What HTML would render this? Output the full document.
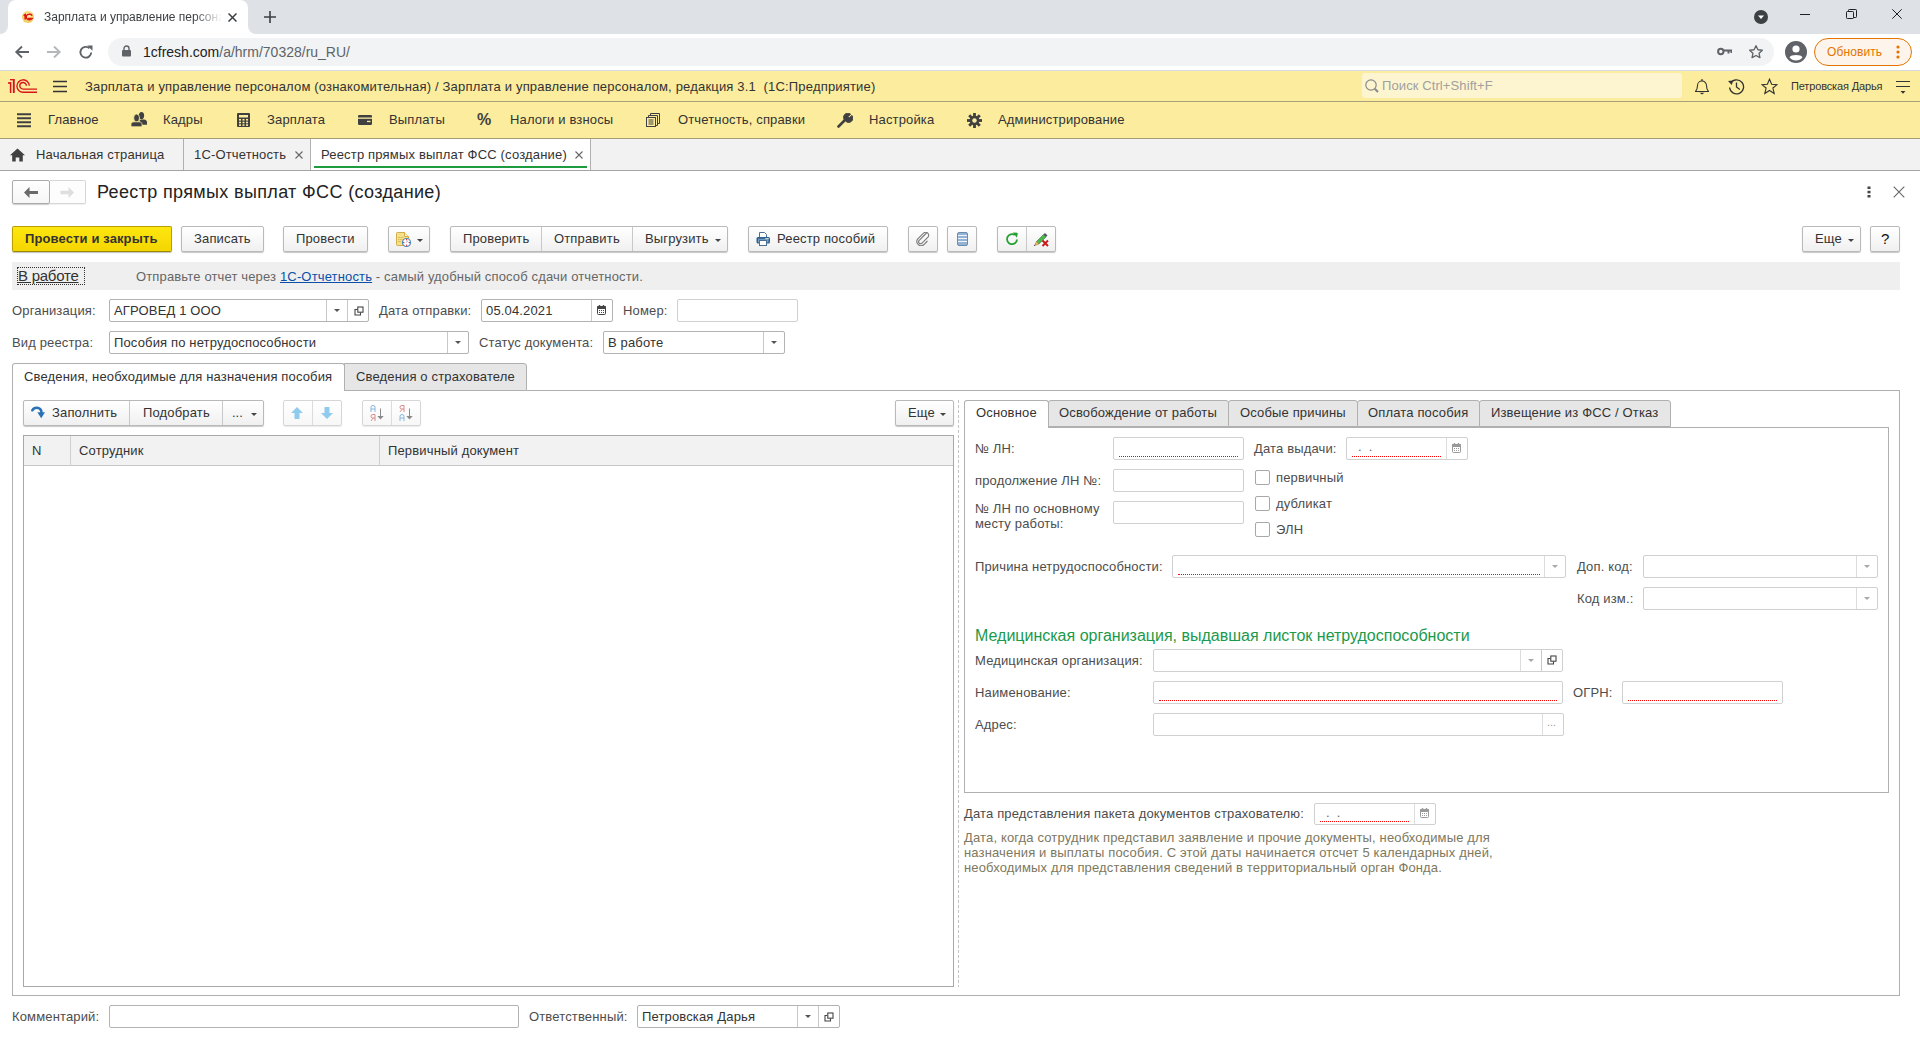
<!DOCTYPE html>
<html><head><meta charset="utf-8">
<style>
*{box-sizing:border-box;margin:0;padding:0}
html,body{width:1920px;height:1040px;overflow:hidden;background:#fff;font-family:"Liberation Sans",sans-serif;position:relative}
.a{position:absolute}
.t{position:absolute;white-space:nowrap;font-size:13px;color:#4d4d4d;line-height:15px}
.inp{position:absolute;border:1px solid #bdbdbd;border-radius:2px;background:#fff}
.btn{position:absolute;border:1px solid #b9b9b9;border-radius:2px;background:linear-gradient(#fff,#f0f0f0);box-shadow:0 1px 1px rgba(0,0,0,.22);font-size:13px;color:#333;white-space:nowrap;text-align:center;line-height:24px}
.dd{position:absolute;top:0;bottom:0;border-left:1px solid #d0d0d0;width:21px}
.dd::after{content:"";position:absolute;left:7px;top:9px;border-left:3px solid transparent;border-right:3px solid transparent;border-top:3px solid #555}
.dd.l::after{border-top-color:#a8a8a8}
.req{position:absolute;left:6px;right:18px;bottom:2px;border-bottom:1px dotted #f00}
</style></head><body>

<!-- ============ CHROME ============ -->
<div class="a" style="left:0;top:0;width:1920px;height:34px;background:#dee1e6"></div>
<div class="a" style="left:8px;top:0px;width:240px;height:34px;background:#fff;border-radius:8px 8px 0 0"></div>
<div class="a" style="left:0;top:26px;width:8px;height:8px;background:#fff"></div><div class="a" style="left:0;top:18px;width:8px;height:16px;background:#dee1e6;border-radius:0 0 8px 0"></div>
<div class="a" style="left:248px;top:26px;width:8px;height:8px;background:#fff"></div><div class="a" style="left:248px;top:18px;width:8px;height:16px;background:#dee1e6;border-radius:0 0 0 8px"></div>
<svg class="a" style="left:22px;top:11px" width="12" height="12" viewBox="0 0 12 12"><defs><radialGradient id="fg" cx="50%" cy="40%" r="60%"><stop offset="0" stop-color="#fff3b0"/><stop offset="1" stop-color="#f0c850"/></radialGradient></defs><circle cx="6" cy="6" r="6" fill="url(#fg)"/><path d="M1.6 4.6 L3.2 3.6 V8.6" stroke="#e01818" stroke-width="1.6" fill="none"/><path d="M10.2 4.6 A3.2 2.8 0 1 0 10 7.6 H6" stroke="#e01818" stroke-width="1.5" fill="none"/></svg>
<div class="a" style="left:44px;top:10px;width:178px;height:16px;overflow:hidden;font-size:12px;line-height:15px;color:#3c4043;white-space:nowrap;-webkit-mask-image:linear-gradient(90deg,#000 150px,transparent 178px)">Зарплата и управление персоналом (ознакомительная)</div>
<svg class="a" style="left:228px;top:13px" width="9" height="9" viewBox="0 0 9 9"><path d="M0.5 0.5 L8.5 8.5 M8.5 0.5 L0.5 8.5" stroke="#3c4043" stroke-width="1.5"/></svg>
<svg class="a" style="left:264px;top:11px" width="12" height="12" viewBox="0 0 12 12"><path d="M6 0 V12 M0 6 H12" stroke="#3c4043" stroke-width="1.6"/></svg>
<svg class="a" style="left:1754px;top:10px" width="14" height="14" viewBox="0 0 14 14"><circle cx="7" cy="7" r="7" fill="#3c4043"/><path d="M4 5.5 H10 L7 9 Z" fill="#fff"/></svg>
<div class="a" style="left:1800px;top:14px;width:10px;height:1px;background:#202124"></div>
<svg class="a" style="left:1846px;top:9px" width="11" height="11" viewBox="0 0 11 11"><rect x="0.5" y="2.5" width="7" height="7" rx="0.8" fill="none" stroke="#202124"/><path d="M2.5 2.5 V1.3 Q2.5 0.5 3.3 0.5 H9.7 Q10.5 0.5 10.5 1.3 V7.7 Q10.5 8.5 9.7 8.5 H7.5" fill="none" stroke="#202124"/></svg>
<svg class="a" style="left:1892px;top:9px" width="10" height="10" viewBox="0 0 10 10"><path d="M0.3 0.3 L9.7 9.7 M9.7 0.3 L0.3 9.7" stroke="#202124" stroke-width="1"/></svg>

<div class="a" style="left:0;top:34px;width:1920px;height:36px;background:#fff"></div>
<svg class="a" style="left:14px;top:44px" width="16" height="16" viewBox="0 0 16 16"><path d="M15 8 H2.5 M8 2.5 L2.3 8 L8 13.5" stroke="#5f6368" stroke-width="1.9" fill="none"/></svg>
<svg class="a" style="left:46px;top:44px" width="16" height="16" viewBox="0 0 16 16"><path d="M1 8 H13.5 M8 2.5 L13.7 8 L8 13.5" stroke="#b5b8bb" stroke-width="1.9" fill="none"/></svg>
<svg class="a" style="left:78px;top:44px" width="16" height="16" viewBox="0 0 16 16"><path d="M13.2 8.5 A5.4 5.4 0 1 1 11.5 4.3" stroke="#5f6368" stroke-width="1.9" fill="none"/><path d="M9.2 1.5 H14.5 V6.8 Z" fill="#5f6368"/></svg>
<div class="a" style="left:108px;top:38px;width:1666px;height:28px;background:#f1f3f4;border-radius:14px"></div>
<svg class="a" style="left:122px;top:45px" width="9" height="12" viewBox="0 0 9 12"><path d="M2 5 V3.5 A2.5 2.5 0 0 1 7 3.5 V5" stroke="#5f6368" stroke-width="1.4" fill="none"/><rect x="0" y="5" width="9" height="6.5" rx="1" fill="#5f6368"/></svg>
<div class="a" style="left:143px;top:44px;font-size:14px;line-height:16px;white-space:nowrap;color:#5f6368"><span style="color:#202124">1cfresh.com</span>/a/hrm/70328/ru_RU/</div>
<svg class="a" style="left:1717px;top:47px" width="15" height="9" viewBox="0 0 15 9"><circle cx="3.8" cy="4.5" r="2.7" stroke="#5f6368" stroke-width="2" fill="none"/><path d="M6.5 3.5 H14.5 V6 M11.5 3.5 V6.5" stroke="#5f6368" stroke-width="2" fill="none"/></svg>
<svg class="a" style="left:1748px;top:44px" width="16" height="16" viewBox="0 0 24 24"><path d="M12 2.5 L14.9 8.6 L21.5 9.4 L16.6 13.9 L17.9 20.5 L12 17.2 L6.1 20.5 L7.4 13.9 L2.5 9.4 L9.1 8.6 Z" stroke="#5f6368" stroke-width="2" fill="none" stroke-linejoin="round"/></svg>
<svg class="a" style="left:1785px;top:41px" width="22" height="22" viewBox="0 0 22 22"><circle cx="11" cy="11" r="11" fill="#5f6368"/><circle cx="11" cy="8" r="3.6" fill="#fff"/><path d="M4.5 16.3 C6 13.3 16 13.3 17.5 16.3 C16 18.5 13.5 19.6 11 19.6 C8.5 19.6 6 18.5 4.5 16.3 Z" fill="#fff"/></svg>
<div class="a" style="left:1814px;top:38px;width:98px;height:28px;border:1px solid #e37400;border-radius:14px;background:#fdf4eb"></div>
<div class="a" style="left:1827px;top:44px;font-size:12px;line-height:16px;color:#e37400;white-space:nowrap;letter-spacing:.1px">Обновить</div>
<svg class="a" style="left:1896px;top:45px" width="4" height="14" viewBox="0 0 4 14"><circle cx="2" cy="2" r="1.6" fill="#e37400"/><circle cx="2" cy="7" r="1.6" fill="#e37400"/><circle cx="2" cy="12" r="1.6" fill="#e37400"/></svg>

<!-- ============ 1C HEADER ============ -->
<div class="a" style="left:0;top:70px;width:1920px;height:68px;background:#fbec9e"></div>
<div class="a" style="left:0;top:70px;width:1920px;height:1px;background:#d7d9e1"></div>
<div class="a" style="left:0;top:101px;width:1920px;height:1px;background:#a8a07a"></div>
<div class="a" style="left:0;top:138px;width:1920px;height:1px;background:#a49c74"></div>
<svg class="a" style="left:0;top:70px" width="80" height="31" viewBox="0 70 80 31">
<g stroke="#d8141b" fill="none">
<path d="M8 83 H11" stroke-width="1.6"/>
<path d="M10.6 82.2 V93" stroke-width="1.5"/>
<path d="M10 79.7 H14.5" stroke-width="1.3"/>
<path d="M13.8 79.2 V93" stroke-width="1.9"/>
<path d="M29.3 85.8 A6.2 6.2 0 1 0 23.1 92.2 H37" stroke-width="1.35"/>
<path d="M26.4 85.8 A3.3 3.3 0 1 0 23.1 89.1 H37" stroke-width="1.35"/>
</g>
<g stroke="#333" stroke-width="1.5"><path d="M53 81.5 H67 M53 86.5 H67 M53 91.5 H67"/></g>
</svg>
<div class="t" style="left:85px;top:79px;color:#333;letter-spacing:.18px">Зарплата и управление персоналом (ознакомительная) / Зарплата и управление персоналом, редакция 3.1&nbsp; (1С:Предприятие)</div>
<div class="a" style="left:1362px;top:73px;width:320px;height:25px;background:#fdf5cf;border-radius:3px"></div>
<svg class="a" style="left:1364px;top:78px" width="16" height="16" viewBox="0 0 16 16"><circle cx="7" cy="7" r="5.2" stroke="#888" stroke-width="1.2" fill="none"/><path d="M10.8 10.8 L14 14" stroke="#888" stroke-width="2"/></svg>
<div class="t" style="left:1382px;top:78px;color:#a0a0a0;letter-spacing:.1px">Поиск Ctrl+Shift+F</div>
<svg class="a" style="left:1694px;top:78px" width="16" height="17" viewBox="0 0 16 17"><path d="M1.5 13.5 C3 12 3.5 10.5 3.5 7.5 A4.5 4.5 0 0 1 12.5 7.5 C12.5 10.5 13 12 14.5 13.5 Z" stroke="#333" stroke-width="1.1" fill="none" stroke-linejoin="round"/><path d="M8 1 V3" stroke="#333" stroke-width="1.2"/><path d="M5.5 14.8 H10.5 L8 16.6 Z" fill="#333"/></svg>
<svg class="a" style="left:1727px;top:78px" width="18" height="17" viewBox="0 0 18 17"><path d="M3.6 5.2 A7 7 0 1 1 2.6 9.5" stroke="#333" stroke-width="1.3" fill="none"/><path d="M1 3 L4.8 7 L6 2.5 Z" fill="#333"/><path d="M9.5 4.5 V9 L12.8 11.5" stroke="#333" stroke-width="1.3" fill="none"/></svg>
<svg class="a" style="left:1761px;top:78px" width="17" height="17" viewBox="0 0 24 24"><path d="M12 1.8 L15 8.9 L22.6 9.4 L16.8 14.2 L18.6 21.8 L12 17.7 L5.4 21.8 L7.2 14.2 L1.4 9.4 L9 8.9 Z" stroke="#333" stroke-width="1.6" fill="none" stroke-linejoin="miter"/></svg>
<div class="t" style="left:1791px;top:79px;font-size:11px;color:#333;letter-spacing:-.15px">Петровская Дарья</div>
<svg class="a" style="left:1896px;top:80px" width="15" height="15" viewBox="0 0 15 15"><path d="M0 1.5 H14 M0 6.5 H14" stroke="#333" stroke-width="1"/><path d="M4.5 11 H9.5 L7 13.8 Z" fill="#333"/></svg>

<!-- sections -->
<svg class="a" style="left:17px;top:113px" width="15" height="16" viewBox="0 0 15 16"><path d="M0 1.3 H14 M0 5.3 H14 M0 9.3 H14 M0 13.3 H14" stroke="#404040" stroke-width="2"/></svg>
<div class="t" style="left:48px;top:112px;color:#333;letter-spacing:.15px">Главное</div>
<svg class="a" style="left:131px;top:112px" width="17" height="15" viewBox="0 0 17 15"><ellipse cx="10.5" cy="3.6" rx="2.6" ry="3.6" fill="#404040"/><path d="M8.5 8.3 C9.5 7.6 11.5 7.6 13 7.6 C15 7.8 16 8.8 16 10.5 V12.8 H9.5 Z" fill="#404040"/><ellipse cx="5.6" cy="6" rx="2.9" ry="3.9" fill="#404040" stroke="#fbec9e" stroke-width="0.8"/><path d="M0 12.5 C0 10.8 1 10 3 9.8 H8.2 C10.2 10 11 10.8 11 12.5 V14.8 H0 Z" fill="#404040" stroke="#fbec9e" stroke-width="0.8"/></svg>
<div class="t" style="left:163px;top:112px;color:#333;letter-spacing:.15px">Кадры</div>
<svg class="a" style="left:237px;top:113px" width="13" height="14" viewBox="0 0 13 14"><rect x="0" y="0" width="13" height="14" rx="1" fill="#404040"/><rect x="2" y="2" width="9" height="2.5" fill="#fbec9e"/><g fill="#fbec9e"><rect x="2" y="6" width="2" height="1.6"/><rect x="5.5" y="6" width="2" height="1.6"/><rect x="9" y="6" width="2" height="1.6"/><rect x="2" y="8.7" width="2" height="1.6"/><rect x="5.5" y="8.7" width="2" height="1.6"/><rect x="9" y="8.7" width="2" height="1.6"/><rect x="2" y="11.3" width="2" height="1.6"/><rect x="5.5" y="11.3" width="2" height="1.6"/><rect x="9" y="11.3" width="2" height="1.6"/></g></svg>
<div class="t" style="left:267px;top:112px;color:#333;letter-spacing:.15px">Зарплата</div>
<svg class="a" style="left:358px;top:115px" width="14" height="10" viewBox="0 0 14 10"><rect x="0" y="0" width="14" height="10" rx="1.2" fill="#404040"/><rect x="0" y="2.5" width="14" height="1.3" fill="#fbec9e"/><rect x="9" y="5.8" width="3.5" height="1.3" fill="#fbec9e"/></svg>
<div class="t" style="left:389px;top:112px;color:#333;letter-spacing:.15px">Выплаты</div>
<div class="a" style="left:477px;top:111px;font-size:16px;font-weight:bold;color:#404040;line-height:18px">%</div>
<div class="t" style="left:510px;top:112px;color:#333;letter-spacing:.15px">Налоги и взносы</div>
<svg class="a" style="left:646px;top:113px" width="14" height="14" viewBox="0 0 14 14"><g fill="none" stroke="#404040" stroke-width="1"><path d="M4.5 2.5 V0.5 H13.5 V10.5 H11.5"/><path d="M2.5 4.5 V2.5 H11.5 V12.5 H9.5"/><rect x="0.5" y="4.5" width="9" height="9"/><path d="M2.5 7 H7.5 M2.5 9 H7.5 M2.5 11 H7.5"/></g></svg>
<div class="t" style="left:678px;top:112px;color:#333;letter-spacing:.15px">Отчетность, справки</div>
<svg class="a" style="left:837px;top:113px" width="16" height="15" viewBox="0 0 16 15"><path d="M1.5 13.5 L8 7" stroke="#404040" stroke-width="2.6" stroke-linecap="round"/><path d="M8 7.5 A4.2 4.2 0 0 1 13.6 1.2 L11 3.8 L12.2 5 L14.8 2.4 A4.2 4.2 0 0 1 8.5 8 Z" fill="#404040" stroke="#404040" stroke-width="1"/></svg>
<div class="t" style="left:869px;top:112px;color:#333;letter-spacing:.15px">Настройка</div>
<svg class="a" style="left:967px;top:113px" width="15" height="15" viewBox="0 0 16 16"><g fill="#404040"><circle cx="8" cy="8" r="5.2"/><rect x="6.5" y="0" width="3" height="16"/><rect x="0" y="6.5" width="16" height="3"/><rect x="6.5" y="0" width="3" height="16" transform="rotate(45 8 8)"/><rect x="6.5" y="0" width="3" height="16" transform="rotate(-45 8 8)"/></g><circle cx="8" cy="8" r="2.4" fill="#fbec9e"/></svg>
<div class="t" style="left:998px;top:112px;color:#333;letter-spacing:.15px">Администрирование</div>

<!-- ============ OPEN TABS BAR ============ -->
<div class="a" style="left:0;top:139px;width:1920px;height:31px;background:#f2f2f2"></div>
<div class="a" style="left:311px;top:139px;width:279px;height:31px;background:#fff"></div>
<div class="a" style="left:0;top:170px;width:1920px;height:1px;background:#a3a3a3"></div>
<div class="a" style="left:183px;top:139px;width:1px;height:31px;background:#b0b0b0"></div>
<div class="a" style="left:310px;top:139px;width:1px;height:31px;background:#b0b0b0"></div>
<div class="a" style="left:590px;top:139px;width:1px;height:31px;background:#b0b0b0"></div>
<svg class="a" style="left:10px;top:148px" width="15" height="14" viewBox="0 0 15 14"><path d="M7.5 0.5 L15 7.2 H12.8 V13.5 H9.3 V9.5 H5.7 V13.5 H2.2 V7.2 H0 Z" fill="#404040"/></svg>
<div class="t" style="left:36px;top:147px;color:#333;letter-spacing:.15px">Начальная страница</div>
<div class="t" style="left:194px;top:147px;color:#333;letter-spacing:.15px">1С-Отчетность</div>
<svg class="a" style="left:295px;top:151px" width="8" height="8" viewBox="0 0 8 8"><path d="M0.5 0.5 L7.5 7.5 M7.5 0.5 L0.5 7.5" stroke="#666" stroke-width="1.1"/></svg>
<div class="t" style="left:321px;top:147px;color:#333;letter-spacing:.18px">Реестр прямых выплат ФСС (создание)</div>
<svg class="a" style="left:575px;top:151px" width="8" height="8" viewBox="0 0 8 8"><path d="M0.5 0.5 L7.5 7.5 M7.5 0.5 L0.5 7.5" stroke="#666" stroke-width="1.1"/></svg>
<div class="a" style="left:314px;top:166px;width:273px;height:2px;background:#1e9b3e"></div>

<!-- ============ FORM HEADER ============ -->
<div class="btn" style="left:12px;top:180px;width:38px;height:24px;border-color:#ababab;border-radius:2px;background:linear-gradient(#fff,#f6f6f6);box-shadow:0 1px 1px rgba(0,0,0,.2)"></div>
<div class="btn" style="left:50px;top:180px;width:36px;height:24px;border-color:#d6d6d6;border-left:none;box-shadow:0 1px 1px rgba(0,0,0,.06);border-radius:0 2px 2px 0;background:#fdfdfd"></div>
<svg class="a" style="left:24px;top:187px" width="14" height="11" viewBox="0 0 14 11"><path d="M0 5.5 L5.5 0 V4 H14 V7 H5.5 V11 Z" fill="#6a6a6a"/></svg>
<svg class="a" style="left:60px;top:187px" width="14" height="11" viewBox="0 0 14 11"><path d="M14 5.5 L8.5 0 V3.8 H0.5 V7.2 H8.5 V11 Z" fill="#dedede"/></svg>
<div class="t" style="left:97px;top:182px;font-size:18px;line-height:21px;color:#222;letter-spacing:.35px">Реестр прямых выплат ФСС (создание)</div>
<svg class="a" style="left:1867px;top:186px" width="4" height="12" viewBox="0 0 4 12"><rect x="0.5" y="0.5" width="3" height="2.5" fill="#444"/><rect x="0.5" y="4.8" width="3" height="2.5" fill="#444"/><rect x="0.5" y="9" width="3" height="2.5" fill="#444"/></svg>
<svg class="a" style="left:1893px;top:186px" width="12" height="12" viewBox="0 0 12 12"><path d="M0.7 0.7 L11.3 11.3 M11.3 0.7 L0.7 11.3" stroke="#666" stroke-width="1.1"/></svg>

<!-- command bar -->
<div class="a" style="left:12px;top:226px;width:160px;height:26px;border:1px solid #b9a000;border-bottom-color:#9c8800;border-radius:2px;background:linear-gradient(#ffe60f,#f4d600);box-shadow:0 1px 1px rgba(0,0,0,.25)"></div>
<div class="t" style="left:25px;top:231px;font-weight:bold;color:#333;letter-spacing:.12px">Провести и закрыть</div>
<div class="btn" style="left:181px;top:226px;width:83px;height:26px"></div>
<div class="t" style="left:194px;top:231px;color:#333;letter-spacing:.15px">Записать</div>
<div class="btn" style="left:283px;top:226px;width:85px;height:26px"></div>
<div class="t" style="left:296px;top:231px;color:#333;letter-spacing:.15px">Провести</div>
<div class="btn" style="left:388px;top:226px;width:42px;height:26px"></div>
<svg class="a" style="left:395px;top:231px" width="17" height="17" viewBox="0 0 17 17"><path d="M1.5 2.5 Q1.5 1.5 2.5 1.5 H9.5 L13.5 5.5 V13.5 Q13.5 14.5 12.5 14.5 H2.5 Q1.5 14.5 1.5 13.5 Z" fill="#f3df8c" stroke="#d2ad48" stroke-width="1"/><path d="M9.5 1.5 V5.5 H13.5" fill="#fff4c8" stroke="#d2ad48" stroke-width="1"/><g fill="#dcbc5c"><rect x="3" y="6" width="2" height="1"/><rect x="5.5" y="6" width="3" height="1"/><rect x="3" y="8" width="1" height="1"/><rect x="4.5" y="8" width="3" height="1"/><rect x="3" y="10" width="3" height="1"/></g><circle cx="11.5" cy="11.5" r="4" fill="#fff" stroke="#4d84bc" stroke-width="1.2"/><g fill="#e01010"><rect x="11" y="8.2" width="1.1" height="1.1"/><rect x="11" y="13.7" width="1.1" height="1.1"/><rect x="8.2" y="11" width="1.1" height="1.1"/><rect x="13.7" y="11" width="1.1" height="1.1"/></g><path d="M11.5 11.5 L12.9 9.6" stroke="#7aa4d8" stroke-width="0.9"/></svg>
<div class="a" style="left:417px;top:239px;border-left:3px solid transparent;border-right:3px solid transparent;border-top:3px solid #444"></div>
<div class="btn" style="left:450px;top:226px;width:278px;height:26px"></div>
<div class="a" style="left:541px;top:227px;width:1px;height:24px;background:#c8c8c8"></div>
<div class="a" style="left:632px;top:227px;width:1px;height:24px;background:#c8c8c8"></div>
<div class="t" style="left:463px;top:231px;color:#333;letter-spacing:.15px">Проверить</div>
<div class="t" style="left:554px;top:231px;color:#333;letter-spacing:.15px">Отправить</div>
<div class="t" style="left:645px;top:231px;color:#333;letter-spacing:.15px">Выгрузить</div>
<div class="a" style="left:715px;top:239px;border-left:3px solid transparent;border-right:3px solid transparent;border-top:3px solid #444"></div>
<div class="btn" style="left:748px;top:226px;width:140px;height:26px"></div>
<svg class="a" style="left:756px;top:232px" width="15" height="14" viewBox="0 0 15 14"><path d="M3.5 5 V0.5 H8.5 L10.5 2.5 V5" fill="#fff" stroke="#4d6f90" stroke-width="1"/><rect x="0.5" y="5" width="13.5" height="6.5" rx="1.5" fill="#2f6090"/><rect x="2" y="6.5" width="10.5" height="4" fill="#7fa2c4"/><rect x="2" y="6.2" width="10.5" height="1" fill="#3a6896"/><rect x="9.5" y="6" width="1.2" height="1.2" fill="#fff"/><rect x="11.3" y="6" width="1.2" height="1.2" fill="#fff"/><rect x="3.5" y="8.5" width="7" height="5" fill="#fff" stroke="#4d6f90" stroke-width="1"/></svg>
<div class="t" style="left:777px;top:231px;color:#333;letter-spacing:.15px">Реестр пособий</div>
<div class="btn" style="left:908px;top:226px;width:30px;height:26px"></div>
<svg class="a" style="left:916px;top:232px" width="14" height="14" viewBox="0 0 14 14"><path d="M11 0.5 L3 8.5 A2 2 0 0 0 5.8 11.3 L12 5.1 A3 3 0 0 0 7.8 0.9 L1.8 6.9 A4.2 4.2 0 0 0 7.7 12.8 L11.5 9" stroke="#7a7a7a" stroke-width="1.1" fill="none"/></svg>
<div class="btn" style="left:947px;top:226px;width:30px;height:26px"></div>
<svg class="a" style="left:957px;top:232px" width="11" height="14" viewBox="0 0 11 14"><rect x="0.5" y="0.5" width="10" height="13" rx="1.5" fill="#93b4d4" stroke="#6a8cae"/><path d="M1 3.5 H10 M1 6.5 H10 M1 9.5 H10" stroke="#eef4fa" stroke-width="1.1"/></svg>
<div class="btn" style="left:997px;top:226px;width:59px;height:26px"></div>
<div class="a" style="left:1026px;top:227px;width:1px;height:24px;background:#c8c8c8"></div>
<svg class="a" style="left:1005px;top:232px" width="14" height="14" viewBox="0 0 14 14"><path d="M12 7.5 A5 5 0 1 1 9.8 3" stroke="#22a030" stroke-width="1.8" fill="none"/><path d="M7.8 0.5 L12.8 0.8 L12 5.8 Z" fill="#22a030"/></svg>
<svg class="a" style="left:1033px;top:232px" width="17" height="16" viewBox="0 0 17 16"><path d="M3.5 9.5 L10.5 2.5 L13 5 L6 12 Z" fill="#4cb84c" stroke="#3a7a3a" stroke-width="0.6"/><path d="M10.5 2.5 L12 1 L14.5 3.5 L13 5 Z" fill="#4a5868"/><path d="M3.5 9.5 L6 12 L1.2 13.8 Z" fill="#f2c060" stroke="#8a6a3a" stroke-width="0.5"/><path d="M1.2 13.8 L2.2 12.9" stroke="#444" stroke-width="0.8"/><path d="M9.5 8.5 L15 14 M15 8.5 L9.5 14" stroke="#c81818" stroke-width="1.9"/></svg>
<div class="btn" style="left:1802px;top:226px;width:59px;height:26px"></div>
<div class="t" style="left:1815px;top:231px;color:#333;letter-spacing:.15px">Еще</div>
<div class="a" style="left:1848px;top:239px;border-left:3px solid transparent;border-right:3px solid transparent;border-top:3px solid #444"></div>
<div class="btn" style="left:1870px;top:226px;width:30px;height:26px"></div>
<div class="t" style="left:1881px;top:230px;color:#111;font-size:15px;line-height:17px">?</div>

<!-- info bar -->
<div class="a" style="left:12px;top:262px;width:1888px;height:28px;background:#efefef"></div>
<div class="a" style="left:17px;top:267px;width:68px;height:18px;border:1px dotted #333"></div>
<div class="t" style="left:18px;top:268px;font-size:15px;color:#333;text-decoration:underline;letter-spacing:-.25px">В работе</div>
<div class="t" style="left:136px;top:269px;color:#666;letter-spacing:.15px">Отправьте отчет через <span style="color:#0b4fa8;text-decoration:underline">1С-Отчетность</span> - самый удобный способ сдачи отчетности.</div>

<!-- rows -->
<div class="t" style="left:12px;top:303px;letter-spacing:.15px">Организация:</div>
<div class="inp" style="left:109px;top:299px;width:260px;height:23px;border-color:#b3b3b3"><div class="dd" style="left:216px;border-color:#c8c8c8"></div><div class="a" style="left:237px;top:0;bottom:0;width:1px;background:#c8c8c8"></div></div>
<div class="t" style="left:114px;top:303px;color:#333;letter-spacing:.15px">АГРОВЕД 1 ООО</div>
<svg class="a" style="left:354px;top:306px" width="10" height="10" viewBox="0 0 10 10"><path d="M3.5 3.5 H1 V9 H6.5 V6.5" fill="none" stroke="#444" stroke-width="1.1"/><rect x="3.8" y="1" width="5.2" height="5.2" fill="none" stroke="#444" stroke-width="1.1"/></svg>
<div class="t" style="left:379px;top:303px;letter-spacing:.15px">Дата отправки:</div>
<div class="inp" style="left:481px;top:299px;width:132px;height:23px;border-color:#b3b3b3"><div class="a" style="left:109px;top:0;bottom:0;width:1px;background:#c8c8c8"></div></div>
<div class="t" style="left:486px;top:303px;color:#333;letter-spacing:.15px">05.04.2021</div>
<svg class="a" style="left:597px;top:305px" width="9" height="10" viewBox="0 0 9 10"><rect x="0.5" y="1.5" width="8" height="8" rx="1" fill="#fff" stroke="#444"/><rect x="0" y="1" width="9" height="3" rx="0.8" fill="#444"/><rect x="1.8" y="0" width="1.4" height="2" fill="#444"/><rect x="5.8" y="0" width="1.4" height="2" fill="#444"/><g fill="#444"><rect x="2" y="5" width="1" height="1"/><rect x="4" y="5" width="1" height="1"/><rect x="6" y="5" width="1" height="1"/><rect x="2" y="7" width="1" height="1"/><rect x="4" y="7" width="1" height="1"/><rect x="6" y="7" width="1" height="1"/></g></svg>
<div class="t" style="left:623px;top:303px;letter-spacing:.15px">Номер:</div>
<div class="inp" style="left:677px;top:299px;width:121px;height:23px;border-color:#d0d0d0"></div>

<div class="t" style="left:12px;top:335px;letter-spacing:.15px">Вид реестра:</div>
<div class="inp" style="left:109px;top:331px;width:360px;height:23px;border-color:#b3b3b3"><div class="dd" style="left:337px;border-color:#c8c8c8"></div></div>
<div class="t" style="left:114px;top:335px;color:#333;letter-spacing:.15px">Пособия по нетрудоспособности</div>
<div class="t" style="left:479px;top:335px;letter-spacing:.15px">Статус документа:</div>
<div class="inp" style="left:603px;top:331px;width:182px;height:23px;border-color:#b3b3b3"><div class="dd" style="left:159px;border-color:#c8c8c8"></div></div>
<div class="t" style="left:608px;top:335px;color:#333;letter-spacing:.15px">В работе</div>

<!-- main tabs -->
<div class="a" style="left:12px;top:390px;width:1888px;height:606px;border:1px solid #b0b0b0;border-top:none"></div>
<div class="a" style="left:527px;top:390px;width:1373px;height:1px;background:#b0b0b0"></div>
<div class="a" style="left:12px;top:363px;width:333px;height:28px;border:1px solid #b0b0b0;border-bottom:none;border-radius:3px 3px 0 0;background:#fff"></div>
<div class="a" style="left:344px;top:363px;width:183px;height:28px;border:1px solid #b0b0b0;border-radius:0 3px 0 0;background:#e6e6e6"></div>
<div class="t" style="left:24px;top:369px;letter-spacing:.15px;color:#333">Сведения, необходимые для назначения пособия</div>
<div class="t" style="left:356px;top:369px;letter-spacing:.15px;color:#333">Сведения о страхователе</div>

<!-- left panel -->
<div class="btn" style="left:23px;top:400px;width:241px;height:26px"></div>
<div class="a" style="left:129px;top:401px;width:1px;height:24px;background:#c8c8c8"></div>
<div class="a" style="left:222px;top:401px;width:1px;height:24px;background:#c8c8c8"></div>
<svg class="a" style="left:31px;top:406px" width="15" height="13" viewBox="0 0 15 13"><path d="M1.3 4.3 C3 1.2 8.3 0.6 10.3 4.8 V6.5" stroke="#2a72b5" stroke-width="2.5" fill="none" stroke-linecap="round"/><path d="M6.3 6.2 H14 L10.2 12.3 Z" fill="#2a72b5"/></svg>
<div class="t" style="left:52px;top:405px;color:#333;letter-spacing:.15px">Заполнить</div>
<div class="t" style="left:143px;top:405px;color:#333;letter-spacing:.15px">Подобрать</div>
<div class="t" style="left:232px;top:405px;color:#333">...</div>
<div class="a" style="left:251px;top:413px;border-left:3px solid transparent;border-right:3px solid transparent;border-top:3px solid #444"></div>
<div class="btn" style="left:283px;top:400px;width:59px;height:26px;border-color:#d6d6d6;background:linear-gradient(#fff,#f7f7f7);box-shadow:0 1px 1px rgba(0,0,0,.08)"></div>
<div class="a" style="left:312px;top:401px;width:1px;height:24px;background:#dcdcdc"></div>
<svg class="a" style="left:291px;top:407px" width="12" height="12" viewBox="0 0 12 12"><path d="M6 0 L12 6 H8.5 V12 H3.5 V6 H0 Z" fill="#8fcbef"/></svg>
<svg class="a" style="left:321px;top:407px" width="12" height="12" viewBox="0 0 12 12"><path d="M6 12 L12 6 H8.5 V0 H3.5 V6 H0 Z" fill="#8fcbef"/></svg>
<div class="btn" style="left:362px;top:400px;width:59px;height:26px;border-color:#d6d6d6;background:linear-gradient(#fff,#f7f7f7);box-shadow:0 1px 1px rgba(0,0,0,.08)"></div>
<div class="a" style="left:391px;top:401px;width:1px;height:24px;background:#dcdcdc"></div>
<svg class="a" style="left:370px;top:405px" width="16" height="17" viewBox="0 0 16 17"><g transform="translate(0.5 0)"><path d="M0.5 7 V2.3 Q0.5 0.5 2.5 0.5 Q4.5 0.5 4.5 2.3 V7 M0.5 4 H4.5" stroke="#86b6de" stroke-width="1" fill="none"/></g><g transform="translate(0.5 9)"><path d="M4.5 7 V0.5 H2.3 Q0.5 0.5 0.5 2.3 Q0.5 4 2.3 4 H4.5 M2.6 4.2 L0.6 6.8" stroke="#d98888" stroke-width="1" fill="none"/></g><g transform="translate(0 2)"><path d="M10.5 1.5 V10" stroke="#8a8a8a" stroke-width="1"/><path d="M7.3 9 H13.7 L10.5 12.5 Z" fill="#8a8a8a"/></g></svg>
<svg class="a" style="left:399px;top:405px" width="16" height="17" viewBox="0 0 16 17"><g transform="translate(0.5 0)"><path d="M4.5 7 V0.5 H2.3 Q0.5 0.5 0.5 2.3 Q0.5 4 2.3 4 H4.5 M2.6 4.2 L0.6 6.8" stroke="#d98888" stroke-width="1" fill="none"/></g><g transform="translate(0.5 9)"><path d="M0.5 7 V2.3 Q0.5 0.5 2.5 0.5 Q4.5 0.5 4.5 2.3 V7 M0.5 4 H4.5" stroke="#86b6de" stroke-width="1" fill="none"/></g><g transform="translate(0 2)"><path d="M10.5 1.5 V10" stroke="#8a8a8a" stroke-width="1"/><path d="M7.3 9 H13.7 L10.5 12.5 Z" fill="#8a8a8a"/></g></svg>
<div class="btn" style="left:895px;top:400px;width:59px;height:26px"></div>
<div class="t" style="left:908px;top:405px;color:#333;letter-spacing:.15px">Еще</div>
<div class="a" style="left:940px;top:413px;border-left:3px solid transparent;border-right:3px solid transparent;border-top:3px solid #444"></div>

<div class="a" style="left:23px;top:435px;width:931px;height:552px;border:1px solid #a8a8a8"></div>
<div class="a" style="left:24px;top:436px;width:929px;height:30px;background:#f2f2f2;border-bottom:1px solid #c6c6c6"></div>
<div class="a" style="left:70px;top:436px;width:1px;height:30px;background:#cfcfcf"></div>
<div class="a" style="left:379px;top:436px;width:1px;height:30px;background:#cfcfcf"></div>
<div class="t" style="left:32px;top:443px;color:#333">N</div>
<div class="t" style="left:79px;top:443px;color:#333;letter-spacing:.15px">Сотрудник</div>
<div class="t" style="left:388px;top:443px;color:#333;letter-spacing:.15px">Первичный документ</div>
<div class="a" style="left:958px;top:400px;width:1px;height:587px;background:repeating-linear-gradient(#c4c4c4 0 3px,transparent 3px 5px)"></div>

<!-- right panel tabs -->
<div class="a" style="left:964px;top:427px;width:925px;height:366px;border:1px solid #b0b0b0"></div>
<div class="a" style="left:964px;top:400px;width:85px;height:28px;border:1px solid #b0b0b0;border-bottom:none;border-radius:3px 3px 0 0;background:#fff"></div>
<div class="a" style="left:1048px;top:400px;width:181px;height:27px;border:1px solid #b0b0b0;border-radius:3px 3px 0 0;background:#e6e6e6"></div>
<div class="a" style="left:1228px;top:400px;width:130px;height:27px;border:1px solid #b0b0b0;border-radius:3px 3px 0 0;background:#e6e6e6"></div>
<div class="a" style="left:1357px;top:400px;width:123px;height:27px;border:1px solid #b0b0b0;border-radius:3px 3px 0 0;background:#e6e6e6"></div>
<div class="a" style="left:1479px;top:400px;width:192px;height:27px;border:1px solid #b0b0b0;border-radius:3px 3px 0 0;background:#e6e6e6"></div>
<div class="t" style="left:976px;top:405px;color:#333;letter-spacing:.15px">Основное</div>
<div class="t" style="left:1059px;top:405px;color:#333;letter-spacing:.15px">Освобождение от работы</div>
<div class="t" style="left:1240px;top:405px;color:#333;letter-spacing:.15px">Особые причины</div>
<div class="t" style="left:1368px;top:405px;color:#333;letter-spacing:.15px">Оплата пособия</div>
<div class="t" style="left:1491px;top:405px;color:#333;letter-spacing:.15px">Извещение из ФСС / Отказ</div>

<div class="t" style="left:975px;top:441px;letter-spacing:.15px">№ ЛН:</div>
<div class="inp" style="left:1113px;top:437px;width:131px;height:23px;border-color:#d0d0d0"><div class="req" style="left:5px;right:5px"></div></div>
<div class="t" style="left:1254px;top:441px;letter-spacing:.15px">Дата выдачи:</div>
<div class="inp" style="left:1346px;top:437px;width:122px;height:23px;border-color:#d0d0d0"><div class="a" style="left:99px;top:0;bottom:0;width:1px;background:#dcdcdc"></div><div class="req" style="left:5px;right:26px"></div></div>
<div class="t" style="left:1358px;top:439px;color:#666">.&nbsp;&nbsp;.</div>
<svg class="a" style="left:1452px;top:443px" width="9" height="10" viewBox="0 0 9 10"><rect x="0.5" y="1.5" width="8" height="8" rx="1" fill="#fff" stroke="#999"/><rect x="0" y="1" width="9" height="3" rx="0.8" fill="#999"/><rect x="1.8" y="0" width="1.4" height="2" fill="#999"/><rect x="5.8" y="0" width="1.4" height="2" fill="#999"/><g fill="#999"><rect x="2" y="5" width="1" height="1"/><rect x="4" y="5" width="1" height="1"/><rect x="6" y="5" width="1" height="1"/><rect x="2" y="7" width="1" height="1"/><rect x="4" y="7" width="1" height="1"/><rect x="6" y="7" width="1" height="1"/></g></svg>
<div class="t" style="left:975px;top:473px;letter-spacing:.15px">продолжение ЛН №:</div>
<div class="inp" style="left:1113px;top:469px;width:131px;height:23px;border-color:#d0d0d0"></div>
<div class="t" style="left:975px;top:501px;letter-spacing:.15px;line-height:15px">№ ЛН по основному<br>месту работы:</div>
<div class="inp" style="left:1113px;top:501px;width:131px;height:23px;border-color:#d0d0d0"></div>
<div class="a" style="left:1255px;top:470px;width:15px;height:15px;border:1px solid #a8a8a8;border-radius:2px;background:#fff"></div>
<div class="t" style="left:1276px;top:470px;letter-spacing:.15px">первичный</div>
<div class="a" style="left:1255px;top:496px;width:15px;height:15px;border:1px solid #a8a8a8;border-radius:2px;background:#fff"></div>
<div class="t" style="left:1276px;top:496px;letter-spacing:.15px">дубликат</div>
<div class="a" style="left:1255px;top:522px;width:15px;height:15px;border:1px solid #a8a8a8;border-radius:2px;background:#fff"></div>
<div class="t" style="left:1276px;top:522px;letter-spacing:.15px">ЭЛН</div>

<div class="t" style="left:975px;top:559px;letter-spacing:.15px">Причина нетрудоспособности:</div>
<div class="inp" style="left:1172px;top:555px;width:394px;height:23px;border-color:#d0d0d0"><div class="req" style="left:5px;right:25px"></div><div class="dd l" style="left:371px;border-color:#dcdcdc"></div></div>
<div class="t" style="left:1577px;top:559px;letter-spacing:.15px">Доп. код:</div>
<div class="inp" style="left:1643px;top:555px;width:235px;height:23px;border-color:#d0d0d0"><div class="dd l" style="left:212px;border-color:#dcdcdc"></div></div>
<div class="t" style="left:1577px;top:591px;letter-spacing:.15px">Код изм.:</div>
<div class="inp" style="left:1643px;top:587px;width:235px;height:23px;border-color:#d0d0d0"><div class="dd l" style="left:212px;border-color:#dcdcdc"></div></div>

<div class="t" style="left:975px;top:627px;font-size:16px;line-height:18px;color:#1a9a4a">Медицинская организация, выдавшая листок нетрудоспособности</div>
<div class="t" style="left:975px;top:653px;letter-spacing:.15px">Медицинская организация:</div>
<div class="inp" style="left:1153px;top:649px;width:410px;height:23px;border-color:#d0d0d0"><div class="dd l" style="left:366px;border-color:#dcdcdc"></div><div class="a" style="left:387px;top:0;bottom:0;width:1px;background:#c8c8c8"></div></div>
<svg class="a" style="left:1547px;top:655px" width="10" height="10" viewBox="0 0 10 10"><path d="M3.5 3.5 H1 V9 H6.5 V6.5" fill="none" stroke="#444" stroke-width="1.1"/><rect x="3.8" y="1" width="5.2" height="5.2" fill="none" stroke="#444" stroke-width="1.1"/></svg>
<div class="t" style="left:975px;top:685px;letter-spacing:.15px">Наименование:</div>
<div class="inp" style="left:1153px;top:681px;width:410px;height:23px;border-color:#d0d0d0"><div class="req" style="left:5px;right:5px"></div></div>
<div class="t" style="left:1573px;top:685px;letter-spacing:.15px">ОГРН:</div>
<div class="inp" style="left:1622px;top:681px;width:161px;height:23px;border-color:#d0d0d0"><div class="req" style="left:5px;right:5px"></div></div>
<div class="t" style="left:975px;top:717px;letter-spacing:.15px">Адрес:</div>
<div class="inp" style="left:1153px;top:713px;width:411px;height:23px;border-color:#d0d0d0"><div class="a" style="left:388px;top:0;bottom:0;width:1px;background:#dcdcdc"></div></div>
<div class="t" style="left:1547px;top:715px;color:#999;font-size:11px">...</div>

<div class="t" style="left:964px;top:806px;letter-spacing:.15px">Дата представления пакета документов страхователю:</div>
<div class="inp" style="left:1314px;top:803px;width:122px;height:22px;border-color:#d0d0d0"><div class="a" style="left:99px;top:0;bottom:0;width:1px;background:#dcdcdc"></div><div class="req" style="left:5px;right:26px"></div></div>
<div class="t" style="left:1326px;top:805px;color:#666">.&nbsp;&nbsp;.</div>
<svg class="a" style="left:1420px;top:808px" width="9" height="10" viewBox="0 0 9 10"><rect x="0.5" y="1.5" width="8" height="8" rx="1" fill="#fff" stroke="#999"/><rect x="0" y="1" width="9" height="3" rx="0.8" fill="#999"/><rect x="1.8" y="0" width="1.4" height="2" fill="#999"/><rect x="5.8" y="0" width="1.4" height="2" fill="#999"/><g fill="#999"><rect x="2" y="5" width="1" height="1"/><rect x="4" y="5" width="1" height="1"/><rect x="6" y="5" width="1" height="1"/><rect x="2" y="7" width="1" height="1"/><rect x="4" y="7" width="1" height="1"/><rect x="6" y="7" width="1" height="1"/></g></svg>
<div class="t" style="left:964px;top:830px;color:#7d785e;letter-spacing:.15px;line-height:15px">Дата, когда сотрудник представил заявление и прочие документы, необходимые для<br>назначения и выплаты пособия. С этой даты начинается отсчет 5 календарных дней,<br>необходимых для представления сведений в территориальный орган Фонда.</div>

<!-- bottom -->
<div class="t" style="left:12px;top:1009px;letter-spacing:.15px">Комментарий:</div>
<div class="inp" style="left:109px;top:1005px;width:410px;height:23px;border-color:#b3b3b3"></div>
<div class="t" style="left:529px;top:1009px;letter-spacing:.15px">Ответственный:</div>
<div class="inp" style="left:637px;top:1005px;width:203px;height:23px;border-color:#b3b3b3"><div class="dd" style="left:159px;border-color:#c8c8c8"></div><div class="a" style="left:180px;top:0;bottom:0;width:1px;background:#c8c8c8"></div></div>
<div class="t" style="left:642px;top:1009px;color:#333;letter-spacing:.15px">Петровская Дарья</div>
<svg class="a" style="left:824px;top:1012px" width="10" height="10" viewBox="0 0 10 10"><path d="M3.5 3.5 H1 V9 H6.5 V6.5" fill="none" stroke="#444" stroke-width="1.1"/><rect x="3.8" y="1" width="5.2" height="5.2" fill="none" stroke="#444" stroke-width="1.1"/></svg>

</body></html>
